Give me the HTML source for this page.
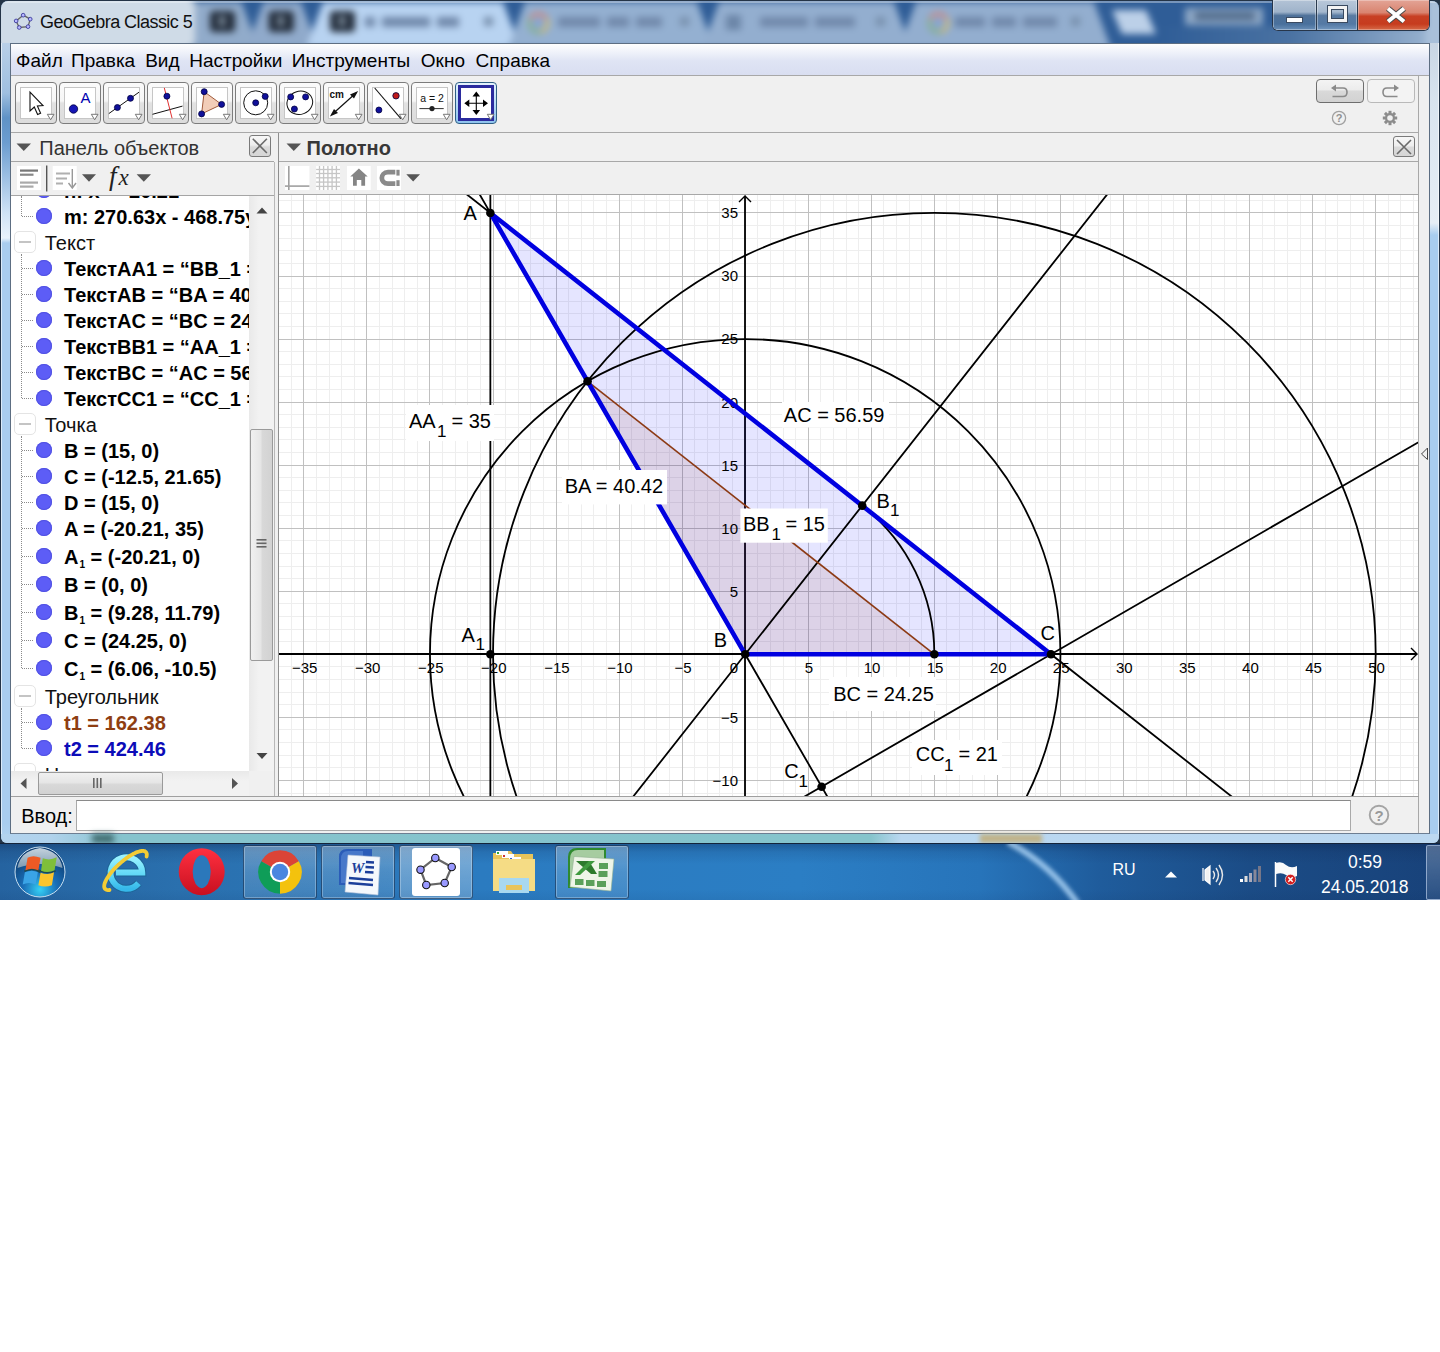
<!DOCTYPE html><html><head><meta charset="utf-8"><style>*{box-sizing:border-box;margin:0;padding:0}
html,body{width:1440px;height:1352px;overflow:hidden;background:#fff;font-family:"Liberation Sans",sans-serif;color:#000;position:relative}
.a{position:absolute}
.t{position:absolute;white-space:nowrap;line-height:1}
svg{overflow:visible}
</style></head><body>
<div class="a" style="left:0;top:0;width:1440px;height:845px;background:#243447"></div>
<div class="a" style="left:1px;top:1px;width:1438px;height:842px;border-radius:7px 7px 6px 6px;overflow:hidden;background:linear-gradient(180deg,#c3d3e5 0,#b2c9e2 44px,#a9c8ea 120px,#b2d3f0 700px,#a6cbe6 843px)"></div>
<div class="a" style="left:1px;top:43px;width:9px;height:791px;background:linear-gradient(180deg,#b9d0e8 0,#9fbfe0 50px,#5f92c6 75px,#6c9dd0 100px,#cfe3f6 170px,#e9f3fc 195px,#a9cdef 200px,#a9cdef 780px,#b3d4f0 800px)"></div>
<div class="a" style="left:1430px;top:43px;width:9px;height:791px;background:linear-gradient(180deg,#c9d6e4 0,#d9e4ef 60px,#e6eef6 180px,#a8cdef 192px,#a8cdef 800px)"></div>
<div class="a" style="left:1px;top:43px;width:1px;height:791px;background:rgba(255,255,255,0.6)"></div>
<div class="a" style="left:1438px;top:43px;width:1px;height:791px;background:rgba(255,255,255,0.6)"></div>
<div class="a" style="left:1px;top:1px;width:1438px;height:42px;border-radius:7px 7px 0 0;overflow:hidden;background:#2f5d97"><svg class="a" style="left:-1px;top:-1px;filter:blur(3.5px)" width="1440" height="46" viewBox="0 0 1440 46"><rect x="-10" y="-10" width="1460" height="70" fill="#2f5d97"/><defs><linearGradient id="rb" x1="0" x2="1" y1="0" y2="0"><stop offset="0" stop-color="#2f5d97"/><stop offset="0.45" stop-color="#4a72a2"/><stop offset="1" stop-color="#a3bbd6"/></linearGradient></defs><rect x="1160" y="26" width="290" height="30" fill="url(#rb)"/><rect x="1425" y="-5" width="30" height="60" fill="#a9c0da"/><path d="M150,2 L241.5,2 L258.5,48 L133,48 Z" fill="#91abca"/><path d="M263.5,2 L301,2 L318,48 L246.5,48 Z" fill="#90aacb"/><path d="M323,2 L503,2 L520,48 L306,48 Z" fill="#b8d3f1"/><path d="M525,2 L697,2 L714,48 L508,48 Z" fill="#94b0d1"/><path d="M719,2 L894,2 L911,48 L702,48 Z" fill="#93aecf"/><path d="M916,2 L1094,2 L1111,48 L899,48 Z" fill="#93aecf"/><path d="M1112,10 L1146,10 L1156,34 L1122,34 Z" fill="#bcd0e8"/><rect x="1185" y="8" width="78" height="17" fill="#8ea8c6"/><rect x="1195" y="12" width="60" height="8" fill="#506a8a"/><rect x="-10" y="-5" width="205" height="55" rx="10" fill="#cfdbe7"/><rect x="210" y="11" width="25" height="21" rx="4" fill="#232d3b"/><rect x="219" y="16" width="6" height="10" fill="#8090a0"/><rect x="268.7" y="11" width="25" height="21" rx="4" fill="#232d3b"/><rect x="277.7" y="16" width="6" height="10" fill="#8090a0"/><rect x="330" y="11" width="25" height="21" rx="4" fill="#232d3b"/><rect x="339" y="16" width="6" height="10" fill="#8090a0"/><rect x="365" y="17" width="10" height="10" fill="#7189ab"/><rect x="382" y="17" width="48" height="10" fill="#7189ab"/><rect x="437" y="17" width="22" height="10" fill="#7189ab"/><rect x="558" y="17" width="42" height="10" fill="#7189ab"/><rect x="607" y="17" width="22" height="10" fill="#7189ab"/><rect x="636" y="17" width="26" height="10" fill="#7189ab"/><rect x="760" y="17" width="48" height="10" fill="#7189ab"/><rect x="815" y="17" width="40" height="10" fill="#7189ab"/><rect x="955" y="17" width="30" height="10" fill="#7189ab"/><rect x="992" y="17" width="24" height="10" fill="#7189ab"/><rect x="1023" y="17" width="34" height="10" fill="#7189ab"/><rect x="484" y="17" width="9" height="9" fill="#7890ad"/><rect x="680" y="17" width="9" height="9" fill="#7890ad"/><rect x="876" y="17" width="9" height="9" fill="#7890ad"/><rect x="1071" y="17" width="9" height="9" fill="#7890ad"/><g transform="translate(538.5,23)"><path d="M-8,-4 A9,9 0 0 1 8,-4" fill="none" stroke="#c98a86" stroke-width="4"/><path d="M8,-4 A9,9 0 0 1 2,8.8" fill="none" stroke="#c9b877" stroke-width="4"/><path d="M2,8.8 A9,9 0 0 1 -8,-4" fill="none" stroke="#86b08e" stroke-width="4"/><circle r="4" fill="#7fa0d6"/></g><g transform="translate(938.5,23)"><path d="M-8,-4 A9,9 0 0 1 8,-4" fill="none" stroke="#c98a86" stroke-width="4"/><path d="M8,-4 A9,9 0 0 1 2,8.8" fill="none" stroke="#c9b877" stroke-width="4"/><path d="M2,8.8 A9,9 0 0 1 -8,-4" fill="none" stroke="#86b08e" stroke-width="4"/><circle r="4" fill="#7fa0d6"/></g><rect x="726" y="15" width="15" height="15" fill="#6c86a8"/></svg><div class="a" style="left:0;top:0;width:1438px;height:2px;background:rgba(255,255,255,0.35)"></div></div>
<svg class="a" style="left:12px;top:12px" width="22" height="20" viewBox="0 0 22 20"><g transform="translate(1.5,1) scale(0.88)"><polygon points="11,2.5 19,7 16.5,15.5 6.5,16.5 3,9" fill="none" stroke="#666" stroke-width="1.5"/><circle cx="11" cy="2.5" r="2.1" fill="#b8b8ff" stroke="#2a2a90" stroke-width="0.9"/><circle cx="19" cy="7" r="2.1" fill="#b8b8ff" stroke="#2a2a90" stroke-width="0.9"/><circle cx="16.5" cy="15.5" r="2.1" fill="#b8b8ff" stroke="#2a2a90" stroke-width="0.9"/><circle cx="6.5" cy="16.5" r="2.1" fill="#b8b8ff" stroke="#2a2a90" stroke-width="0.9"/><circle cx="3" cy="9" r="2.1" fill="#b8b8ff" stroke="#2a2a90" stroke-width="0.9"/></g></svg>
<div class="t" style="left:40px;top:13px;font-size:18px;color:#111;letter-spacing:-0.55px">GeoGebra Classic 5</div>
<div class="a" style="left:1272px;top:0;width:158px;height:31px;border:1px solid #27364a;border-top:none;border-radius:0 0 6px 6px;overflow:hidden;background:#d8e2ee"><div class="a" style="left:0;top:0;width:43px;height:30px;background:linear-gradient(180deg,#b3c3d6 0,#9fb3ca 40%,#4f7199 52%,#49709c 80%,#6a8fb8 100%);box-shadow:inset 0 0 0 1px rgba(255,255,255,0.35)"></div><div class="a" style="left:43px;top:0;width:1px;height:30px;background:#2a3a4e"></div><div class="a" style="left:44px;top:0;width:40px;height:30px;background:linear-gradient(180deg,#b9c8da 0,#a5b8ce 40%,#5a7ba2 52%,#5479a4 80%,#7398c0 100%);box-shadow:inset 0 0 0 1px rgba(255,255,255,0.35)"></div><div class="a" style="left:84px;top:0;width:1px;height:30px;background:#2a3a4e"></div><div class="a" style="left:85px;top:0;width:73px;height:30px;background:linear-gradient(180deg,#e3a496 0,#d98470 42%,#c84024 54%,#c63c1e 80%,#d66a48 100%);box-shadow:inset 0 0 0 1px rgba(255,255,255,0.3)"></div><div class="a" style="left:13px;top:17px;width:17px;height:6px;background:#fff;border:1px solid #3a4a60;"></div><div class="a" style="left:55px;top:6px;width:19px;height:16px;border:3.5px solid #f4f4f4;box-shadow:0 0 0 1px #3a4a60, inset 0 0 0 1px #3a4a60"></div><svg class="a" style="left:111px;top:6px" width="24" height="18" viewBox="0 0 24 18"><path d="M4,2.5 L20,15.5 M20,2.5 L4,15.5" stroke="#4a4a4a" stroke-width="6"/><path d="M4,2.5 L20,15.5 M20,2.5 L4,15.5" stroke="#fff" stroke-width="4"/></svg></div>
<div class="a" style="left:10px;top:43px;width:1420px;height:791px;background:#f0f0f0;border:1px solid #5d6e82;border-bottom-color:#6d7e92"></div>
<div class="a" style="left:11px;top:44px;width:1418px;height:32px;background:linear-gradient(180deg,#fefefe 0,#f3f5fb 20%,#dfe4f4 55%,#d9def1 100%);border-bottom:1px solid #a8a8a8"></div>
<div class="t" style="left:16.0px;top:51px;font-size:19px">Файл</div>
<div class="t" style="left:71.0px;top:51px;font-size:19px">Правка</div>
<div class="t" style="left:145.2px;top:51px;font-size:19px">Вид</div>
<div class="t" style="left:189.2px;top:51px;font-size:19px">Настройки</div>
<div class="t" style="left:291.8px;top:51px;font-size:19px">Инструменты</div>
<div class="t" style="left:420.8px;top:51px;font-size:19px">Окно</div>
<div class="t" style="left:475.6px;top:51px;font-size:19px">Справка</div>
<div class="a" style="left:11px;top:132px;width:1408px;height:1px;background:#a8a8a8"></div><div class="a" style="left:1418px;top:76px;width:1px;height:57px;background:#a8a8a8"></div>
<div class="a" style="left:15.2px;top:82px;width:41.5px;height:41.5px;border:1px solid #7c7c7c;border-radius:4px;background:linear-gradient(180deg,#fbfbfb 0,#f6f6f6 45%,#e2e2e2 50%,#dcdcdc 100%)"></div>
<div class="a" style="left:19.8px;top:86.7px;width:32px;height:32px;border:1px solid #c6c6c6;background:#fff"></div>
<svg class="a" style="left:15.2px;top:82px" width="42" height="42" viewBox="0 0 42 42"><g transform="translate(5,5)"><path d="M10,5 L10,24 L14.3,20 L17.6,27.5 L20.6,26.2 L17.4,18.9 L23,18.6 Z" fill="#fff" stroke="#111" stroke-width="1.1" stroke-linejoin="miter"/></g><path d="M32.3,32.3 L39,32.3 L35.65,37.8 Z" fill="#fff" stroke="#777" stroke-width="1"/></svg>
<div class="a" style="left:59.2px;top:82px;width:41.5px;height:41.5px;border:1px solid #7c7c7c;border-radius:4px;background:linear-gradient(180deg,#fbfbfb 0,#f6f6f6 45%,#e2e2e2 50%,#dcdcdc 100%)"></div>
<div class="a" style="left:63.8px;top:86.7px;width:32px;height:32px;border:1px solid #c6c6c6;background:#fff"></div>
<svg class="a" style="left:59.2px;top:82px" width="42" height="42" viewBox="0 0 42 42"><g transform="translate(5,5)"><circle cx="9.5" cy="22" r="4.2" fill="#1515b5" stroke="#000040" stroke-width="0.8"/><text x="21.5" y="16" font-family="Liberation Sans" font-size="15" fill="#0000b0" text-anchor="middle">A</text></g><path d="M32.3,32.3 L39,32.3 L35.65,37.8 Z" fill="#fff" stroke="#777" stroke-width="1"/></svg>
<div class="a" style="left:103.2px;top:82px;width:41.5px;height:41.5px;border:1px solid #7c7c7c;border-radius:4px;background:linear-gradient(180deg,#fbfbfb 0,#f6f6f6 45%,#e2e2e2 50%,#dcdcdc 100%)"></div>
<div class="a" style="left:107.8px;top:86.7px;width:32px;height:32px;border:1px solid #c6c6c6;background:#fff"></div>
<svg class="a" style="left:103.2px;top:82px" width="42" height="42" viewBox="0 0 42 42"><g transform="translate(5,5)"><line x1="0.8" y1="26.6" x2="31" y2="5.2" stroke="#111" stroke-width="1"/><circle cx="9.4" cy="20.5" r="3.0" fill="#10109a" stroke="#000040" stroke-width="0.8"/><circle cx="22.5" cy="11.3" r="3.0" fill="#10109a" stroke="#000040" stroke-width="0.8"/></g><path d="M32.3,32.3 L39,32.3 L35.65,37.8 Z" fill="#fff" stroke="#777" stroke-width="1"/></svg>
<div class="a" style="left:147.2px;top:82px;width:41.5px;height:41.5px;border:1px solid #7c7c7c;border-radius:4px;background:linear-gradient(180deg,#fbfbfb 0,#f6f6f6 45%,#e2e2e2 50%,#dcdcdc 100%)"></div>
<div class="a" style="left:151.8px;top:86.7px;width:32px;height:32px;border:1px solid #c6c6c6;background:#fff"></div>
<svg class="a" style="left:147.2px;top:82px" width="42" height="42" viewBox="0 0 42 42"><g transform="translate(5,5)"><line x1="0.5" y1="27.3" x2="30.5" y2="19.1" stroke="#111" stroke-width="1"/><line x1="12.3" y1="0.9" x2="20.1" y2="31.3" stroke="#e03030" stroke-width="1"/><circle cx="14.9" cy="9.2" r="3.0" fill="#10109a" stroke="#000040" stroke-width="0.8"/></g><path d="M32.3,32.3 L39,32.3 L35.65,37.8 Z" fill="#fff" stroke="#777" stroke-width="1"/></svg>
<div class="a" style="left:191.2px;top:82px;width:41.5px;height:41.5px;border:1px solid #7c7c7c;border-radius:4px;background:linear-gradient(180deg,#fbfbfb 0,#f6f6f6 45%,#e2e2e2 50%,#dcdcdc 100%)"></div>
<div class="a" style="left:195.8px;top:86.7px;width:32px;height:32px;border:1px solid #c6c6c6;background:#fff"></div>
<svg class="a" style="left:191.2px;top:82px" width="42" height="42" viewBox="0 0 42 42"><g transform="translate(5,5)"><polygon points="8.2,4.7 25.6,17.4 5.6,26.9" fill="#f2cdb8" stroke="#a05a3a" stroke-width="1"/><circle cx="8.2" cy="4.7" r="3.0" fill="#10109a" stroke="#000040" stroke-width="0.8"/><circle cx="25.6" cy="17.4" r="3.0" fill="#10109a" stroke="#000040" stroke-width="0.8"/><circle cx="5.6" cy="26.9" r="3.0" fill="#10109a" stroke="#000040" stroke-width="0.8"/></g><path d="M32.3,32.3 L39,32.3 L35.65,37.8 Z" fill="#fff" stroke="#777" stroke-width="1"/></svg>
<div class="a" style="left:235.2px;top:82px;width:41.5px;height:41.5px;border:1px solid #7c7c7c;border-radius:4px;background:linear-gradient(180deg,#fbfbfb 0,#f6f6f6 45%,#e2e2e2 50%,#dcdcdc 100%)"></div>
<div class="a" style="left:239.8px;top:86.7px;width:32px;height:32px;border:1px solid #c6c6c6;background:#fff"></div>
<svg class="a" style="left:235.2px;top:82px" width="42" height="42" viewBox="0 0 42 42"><g transform="translate(5,5)"><circle cx="15.7" cy="15.8" r="12" fill="none" stroke="#111" stroke-width="1"/><circle cx="15.7" cy="15.8" r="3.0" fill="#10109a" stroke="#000040" stroke-width="0.8"/><circle cx="25.2" cy="9.4" r="3.0" fill="#10109a" stroke="#000040" stroke-width="0.8"/></g><path d="M32.3,32.3 L39,32.3 L35.65,37.8 Z" fill="#fff" stroke="#777" stroke-width="1"/></svg>
<div class="a" style="left:279.2px;top:82px;width:41.5px;height:41.5px;border:1px solid #7c7c7c;border-radius:4px;background:linear-gradient(180deg,#fbfbfb 0,#f6f6f6 45%,#e2e2e2 50%,#dcdcdc 100%)"></div>
<div class="a" style="left:283.8px;top:86.7px;width:32px;height:32px;border:1px solid #c6c6c6;background:#fff"></div>
<svg class="a" style="left:279.2px;top:82px" width="42" height="42" viewBox="0 0 42 42"><g transform="translate(5,5)"><ellipse cx="15.8" cy="15.8" rx="13" ry="11.5" transform="rotate(-20 15.8 15.8)" fill="none" stroke="#111" stroke-width="1"/><circle cx="6.7" cy="9.9" r="3.0" fill="#10109a" stroke="#000040" stroke-width="0.8"/><circle cx="21.6" cy="9.9" r="3.0" fill="#10109a" stroke="#000040" stroke-width="0.8"/><circle cx="10.4" cy="22" r="3.0" fill="#10109a" stroke="#000040" stroke-width="0.8"/></g><path d="M32.3,32.3 L39,32.3 L35.65,37.8 Z" fill="#fff" stroke="#777" stroke-width="1"/></svg>
<div class="a" style="left:323.2px;top:82px;width:41.5px;height:41.5px;border:1px solid #7c7c7c;border-radius:4px;background:linear-gradient(180deg,#fbfbfb 0,#f6f6f6 45%,#e2e2e2 50%,#dcdcdc 100%)"></div>
<div class="a" style="left:327.8px;top:86.7px;width:32px;height:32px;border:1px solid #c6c6c6;background:#fff"></div>
<svg class="a" style="left:323.2px;top:82px" width="42" height="42" viewBox="0 0 42 42"><g transform="translate(5,5)"><text x="1.5" y="11" font-family="Liberation Sans" font-size="10" font-weight="bold" fill="#111">cm</text><line x1="4" y1="27.5" x2="28" y2="6" stroke="#111" stroke-width="1.2"/><path d="M1.9,29.4 L10,26 L6,22 Z M30.1,4.1 L22,7.5 L26,11.5 Z" fill="#111"/></g><path d="M32.3,32.3 L39,32.3 L35.65,37.8 Z" fill="#fff" stroke="#777" stroke-width="1"/></svg>
<div class="a" style="left:367.2px;top:82px;width:41.5px;height:41.5px;border:1px solid #7c7c7c;border-radius:4px;background:linear-gradient(180deg,#fbfbfb 0,#f6f6f6 45%,#e2e2e2 50%,#dcdcdc 100%)"></div>
<div class="a" style="left:371.8px;top:86.7px;width:32px;height:32px;border:1px solid #c6c6c6;background:#fff"></div>
<svg class="a" style="left:367.2px;top:82px" width="42" height="42" viewBox="0 0 42 42"><g transform="translate(5,5)"><line x1="2.7" y1="1" x2="28.9" y2="31.7" stroke="#111" stroke-width="1.1"/><circle cx="24" cy="8.8" r="3.2" fill="#c01a1a" stroke="#000040" stroke-width="0.8"/><circle cx="6.9" cy="23" r="3.0" fill="#10109a" stroke="#000040" stroke-width="0.8"/></g><path d="M32.3,32.3 L39,32.3 L35.65,37.8 Z" fill="#fff" stroke="#777" stroke-width="1"/></svg>
<div class="a" style="left:411.2px;top:82px;width:41.5px;height:41.5px;border:1px solid #7c7c7c;border-radius:4px;background:linear-gradient(180deg,#fbfbfb 0,#f6f6f6 45%,#e2e2e2 50%,#dcdcdc 100%)"></div>
<div class="a" style="left:415.8px;top:86.7px;width:32px;height:32px;border:1px solid #c6c6c6;background:#fff"></div>
<svg class="a" style="left:411.2px;top:82px" width="42" height="42" viewBox="0 0 42 42"><g transform="translate(5,5)"><text x="16" y="15" font-family="Liberation Sans" font-size="10.5" fill="#111" text-anchor="middle">a = 2</text><line x1="3.4" y1="21.6" x2="27.7" y2="21.6" stroke="#333" stroke-width="1"/><circle cx="16" cy="21.6" r="2.6" fill="#222"/></g><path d="M32.3,32.3 L39,32.3 L35.65,37.8 Z" fill="#fff" stroke="#777" stroke-width="1"/></svg>
<div class="a" style="left:455.2px;top:82px;width:41.5px;height:41.5px;border:1px solid #2f6085;border-radius:4px;background:linear-gradient(180deg,#e4f2fc 0,#b9dcf7 50%,#8ec3ee 100%)"></div>
<div class="a" style="left:458.2px;top:85px;width:35.7px;height:35.8px;border:3px solid #2b2b9e;background:#fff"></div>
<svg class="a" style="left:455.2px;top:82px" width="42" height="42" viewBox="0 0 42 42"><g transform="translate(5,5)"><path d="M16.3,6 L16.3,26 M6,16.3 L26,16.3" stroke="#000" stroke-width="1.1"/><path d="M16.3,4.5 L12.5,9.5 L20.1,9.5 Z M16.3,28 L12.5,23 L20.1,23 Z M4.3,16.3 L9.3,12.5 L9.3,20.1 Z M28,16.3 L23,12.5 L23,20.1 Z" fill="#000"/></g><path d="M32.3,32.3 L39,32.3 L35.65,37.8 Z" fill="#fff" stroke="#777" stroke-width="1"/></svg>
<div class="a" style="left:1315.5px;top:79.4px;width:48px;height:24px;border:1px solid #6e6e6e;border-radius:4px;background:linear-gradient(180deg,#f4f4f4 0,#ececec 45%,#d9d9d9 50%,#d2d2d2 100%)"></div>
<div class="a" style="left:1366.6px;top:79.4px;width:48px;height:24px;border:1px solid #b9b9b9;border-radius:4px;background:#f3f3f3"></div>
<svg class="a" style="left:1315px;top:79px" width="100" height="50" viewBox="0 0 100 50"><path d="M20,9 L28,9 Q32,9 32,13.2 Q32,17.5 28,17.5 L17.5,17.5" fill="none" stroke="#8a8a8a" stroke-width="1.6"/><path d="M16,9 L21,5.5 L21,12.5 Z" fill="#8a8a8a"/><path d="M80,9 L72,9 Q68,9 68,13.2 Q68,17.5 72,17.5 L82.5,17.5" fill="none" stroke="#8a8a8a" stroke-width="1.6"/><path d="M84,9 L79,5.5 L79,12.5 Z" fill="#8a8a8a"/><circle cx="24" cy="39" r="6.6" fill="none" stroke="#a0a0a0" stroke-width="1.3"/><text x="24" y="43.3" font-family="Liberation Sans" font-weight="bold" font-size="11" fill="#909090" text-anchor="middle">?</text><g transform="translate(75,39)" fill="#8c8c8c"><rect x="-1.5" y="-7.2" width="3" height="4" transform="rotate(0)"/><rect x="-1.5" y="-7.2" width="3" height="4" transform="rotate(45)"/><rect x="-1.5" y="-7.2" width="3" height="4" transform="rotate(90)"/><rect x="-1.5" y="-7.2" width="3" height="4" transform="rotate(135)"/><rect x="-1.5" y="-7.2" width="3" height="4" transform="rotate(180)"/><rect x="-1.5" y="-7.2" width="3" height="4" transform="rotate(225)"/><rect x="-1.5" y="-7.2" width="3" height="4" transform="rotate(270)"/><rect x="-1.5" y="-7.2" width="3" height="4" transform="rotate(315)"/><circle r="5" fill="#8c8c8c"/><circle r="2.8" fill="#f0f0f0"/></g></svg>
<div class="a" style="left:11px;top:133px;width:263px;height:29px;background:#f0f0f0;border-bottom:1px solid #a5a5a5"></div>
<svg class="a" style="left:16px;top:143px" width="16" height="9"><path d="M0.5,0.5 L15,0.5 L7.75,8 Z" fill="#555"/></svg>
<div class="t" style="left:39.3px;top:138px;font-size:20px;color:#333">Панель объектов</div>
<div class="a" style="left:249.2px;top:135.1px;width:21.7px;height:21.8px;border:1px solid #7a7a7a;border-radius:3px;background:linear-gradient(180deg,#f7f7f7 0,#eeeeee 45%,#dadada 55%,#d6d6d6 100%)"></div>
<svg class="a" style="left:249.2px;top:135.1px" width="22" height="22"><path d="M3.8,3.8 L17.9,18 M17.9,3.8 L3.8,18" stroke="#6a6a6a" stroke-width="1.6"/></svg>
<div class="a" style="left:17px;top:165.7px;width:24px;height:24px;background:#fff"></div>
<svg class="a" style="left:17px;top:165.7px" width="140" height="26"><rect x="3" y="3.5" width="18" height="2.2" fill="#777"/><rect x="3" y="7.6" width="13.5" height="2.2" fill="#888"/><rect x="3" y="15.5" width="18" height="2.2" fill="#aaa"/><rect x="3" y="19.5" width="13.5" height="2.2" fill="#aaa"/><rect x="29" y="-0.5" width="1.4" height="26" fill="#555"/><rect x="35.7" y="0" width="24" height="24" fill="#fff"/><rect x="39" y="6.5" width="14" height="2" fill="#b0b0b0"/><rect x="39" y="11.5" width="11" height="2" fill="#b0b0b0"/><rect x="39" y="16.5" width="7" height="2" fill="#b0b0b0"/><path d="M55.3,3 L55.3,21" stroke="#999" stroke-width="1.4"/><path d="M51.5,17 L55.3,22 L59,17" fill="none" stroke="#999" stroke-width="1.4"/><path d="M65,8.3 L79,8.3 L72,15.7 Z" fill="#555"/><path d="M119.6,8.3 L134,8.3 L126.8,15.7 Z" fill="#555"/></svg>
<div class="t" style="left:109px;top:163px;font-family:'Liberation Serif';font-style:italic;font-size:27px;color:#222;letter-spacing:0px">f<span style="font-size:23px;margin-left:2px">x</span></div>
<div class="a" style="left:11px;top:195px;width:263px;height:1px;background:#a5a5a5"></div>
<div class="a" style="left:11px;top:196px;width:238px;height:575px;background:#fff;overflow:hidden"><div class="a" style="left:10px;top:0.0px;width:0;height:20.0px;border-left:1px dotted #8a8a8a"></div><div class="a" style="left:24.9px;top:-14.0px;width:16px;height:16px;border-radius:8px;background:#5d5df6;box-shadow:inset 0 0 0 1px #5252e2"></div><div class="a" style="left:11px;top:-6.0px;width:11px;height:0;border-top:1px dotted #8a8a8a"></div><div class="t" style="left:53.0px;top:-15.3px;font-size:20px;font-weight:bold;color:#000">n: x = -20.21</div><div class="a" style="left:24.9px;top:12.0px;width:16px;height:16px;border-radius:8px;background:#5d5df6;box-shadow:inset 0 0 0 1px #5252e2"></div><div class="a" style="left:11px;top:20.0px;width:11px;height:0;border-top:1px dotted #8a8a8a"></div><div class="t" style="left:53.0px;top:10.7px;font-size:20px;font-weight:bold;color:#000">m: 270.63x - 468.75y</div><div class="a" style="left:3px;top:34.8px;width:22px;height:22.4px;border:1px solid #e4e4e4;border-radius:5px;background:#fff"></div><div class="a" style="left:8px;top:44.8px;width:12px;height:2.6px;background:#c4c4c4"></div><div class="t" style="left:33.7px;top:36.5px;font-size:20px;color:#111">Текст</div><div class="a" style="left:10px;top:58.0px;width:0;height:144.0px;border-left:1px dotted #8a8a8a"></div><div class="a" style="left:24.9px;top:64.0px;width:16px;height:16px;border-radius:8px;background:#5d5df6;box-shadow:inset 0 0 0 1px #5252e2"></div><div class="a" style="left:11px;top:72.0px;width:11px;height:0;border-top:1px dotted #8a8a8a"></div><div class="t" style="left:53.0px;top:62.7px;font-size:20px;font-weight:bold;color:#000">ТекстAA1 = “BB_1 = 15”</div><div class="a" style="left:24.9px;top:90.0px;width:16px;height:16px;border-radius:8px;background:#5d5df6;box-shadow:inset 0 0 0 1px #5252e2"></div><div class="a" style="left:11px;top:98.0px;width:11px;height:0;border-top:1px dotted #8a8a8a"></div><div class="t" style="left:53.0px;top:88.7px;font-size:20px;font-weight:bold;color:#000">ТекстAB = “BA = 40.42”</div><div class="a" style="left:24.9px;top:116.0px;width:16px;height:16px;border-radius:8px;background:#5d5df6;box-shadow:inset 0 0 0 1px #5252e2"></div><div class="a" style="left:11px;top:124.0px;width:11px;height:0;border-top:1px dotted #8a8a8a"></div><div class="t" style="left:53.0px;top:114.7px;font-size:20px;font-weight:bold;color:#000">ТекстAC = “BC = 24.25”</div><div class="a" style="left:24.9px;top:142.0px;width:16px;height:16px;border-radius:8px;background:#5d5df6;box-shadow:inset 0 0 0 1px #5252e2"></div><div class="a" style="left:11px;top:150.0px;width:11px;height:0;border-top:1px dotted #8a8a8a"></div><div class="t" style="left:53.0px;top:140.7px;font-size:20px;font-weight:bold;color:#000">ТекстBB1 = “AA_1 = 35”</div><div class="a" style="left:24.9px;top:168.0px;width:16px;height:16px;border-radius:8px;background:#5d5df6;box-shadow:inset 0 0 0 1px #5252e2"></div><div class="a" style="left:11px;top:176.0px;width:11px;height:0;border-top:1px dotted #8a8a8a"></div><div class="t" style="left:53.0px;top:166.7px;font-size:20px;font-weight:bold;color:#000">ТекстBC = “AC = 56.59”</div><div class="a" style="left:24.9px;top:194.0px;width:16px;height:16px;border-radius:8px;background:#5d5df6;box-shadow:inset 0 0 0 1px #5252e2"></div><div class="a" style="left:11px;top:202.0px;width:11px;height:0;border-top:1px dotted #8a8a8a"></div><div class="t" style="left:53.0px;top:192.7px;font-size:20px;font-weight:bold;color:#000">ТекстCC1 = “CC_1 = 21”</div><div class="a" style="left:3px;top:216.8px;width:22px;height:22.4px;border:1px solid #e4e4e4;border-radius:5px;background:#fff"></div><div class="a" style="left:8px;top:226.8px;width:12px;height:2.6px;background:#c4c4c4"></div><div class="t" style="left:33.7px;top:218.5px;font-size:20px;color:#111">Точка</div><div class="a" style="left:10px;top:240.0px;width:0;height:232.0px;border-left:1px dotted #8a8a8a"></div><div class="a" style="left:24.9px;top:246.0px;width:16px;height:16px;border-radius:8px;background:#5d5df6;box-shadow:inset 0 0 0 1px #5252e2"></div><div class="a" style="left:11px;top:254.0px;width:11px;height:0;border-top:1px dotted #8a8a8a"></div><div class="t" style="left:53.0px;top:244.7px;font-size:20px;font-weight:bold;color:#000">B = (15, 0)</div><div class="a" style="left:24.9px;top:272.0px;width:16px;height:16px;border-radius:8px;background:#5d5df6;box-shadow:inset 0 0 0 1px #5252e2"></div><div class="a" style="left:11px;top:280.0px;width:11px;height:0;border-top:1px dotted #8a8a8a"></div><div class="t" style="left:53.0px;top:270.7px;font-size:20px;font-weight:bold;color:#000">C = (-12.5, 21.65)</div><div class="a" style="left:24.9px;top:298.0px;width:16px;height:16px;border-radius:8px;background:#5d5df6;box-shadow:inset 0 0 0 1px #5252e2"></div><div class="a" style="left:11px;top:306.0px;width:11px;height:0;border-top:1px dotted #8a8a8a"></div><div class="t" style="left:53.0px;top:296.7px;font-size:20px;font-weight:bold;color:#000">D = (15, 0)</div><div class="a" style="left:24.9px;top:324.0px;width:16px;height:16px;border-radius:8px;background:#5d5df6;box-shadow:inset 0 0 0 1px #5252e2"></div><div class="a" style="left:11px;top:332.0px;width:11px;height:0;border-top:1px dotted #8a8a8a"></div><div class="t" style="left:53.0px;top:322.7px;font-size:20px;font-weight:bold;color:#000">A = (-20.21, 35)</div><div class="a" style="left:24.9px;top:352.0px;width:16px;height:16px;border-radius:8px;background:#5d5df6;box-shadow:inset 0 0 0 1px #5252e2"></div><div class="a" style="left:11px;top:360.0px;width:11px;height:0;border-top:1px dotted #8a8a8a"></div><div class="t" style="left:53.0px;top:350.7px;font-size:20px;font-weight:bold;color:#000">A<span style="font-size:10px;position:relative;top:4px;margin-left:1px">1</span> = (-20.21, 0)</div><div class="a" style="left:24.9px;top:380.0px;width:16px;height:16px;border-radius:8px;background:#5d5df6;box-shadow:inset 0 0 0 1px #5252e2"></div><div class="a" style="left:11px;top:388.0px;width:11px;height:0;border-top:1px dotted #8a8a8a"></div><div class="t" style="left:53.0px;top:378.7px;font-size:20px;font-weight:bold;color:#000">B = (0, 0)</div><div class="a" style="left:24.9px;top:408.0px;width:16px;height:16px;border-radius:8px;background:#5d5df6;box-shadow:inset 0 0 0 1px #5252e2"></div><div class="a" style="left:11px;top:416.0px;width:11px;height:0;border-top:1px dotted #8a8a8a"></div><div class="t" style="left:53.0px;top:406.7px;font-size:20px;font-weight:bold;color:#000">B<span style="font-size:10px;position:relative;top:4px;margin-left:1px">1</span> = (9.28, 11.79)</div><div class="a" style="left:24.9px;top:436.0px;width:16px;height:16px;border-radius:8px;background:#5d5df6;box-shadow:inset 0 0 0 1px #5252e2"></div><div class="a" style="left:11px;top:444.0px;width:11px;height:0;border-top:1px dotted #8a8a8a"></div><div class="t" style="left:53.0px;top:434.7px;font-size:20px;font-weight:bold;color:#000">C = (24.25, 0)</div><div class="a" style="left:24.9px;top:464.0px;width:16px;height:16px;border-radius:8px;background:#5d5df6;box-shadow:inset 0 0 0 1px #5252e2"></div><div class="a" style="left:11px;top:472.0px;width:11px;height:0;border-top:1px dotted #8a8a8a"></div><div class="t" style="left:53.0px;top:462.7px;font-size:20px;font-weight:bold;color:#000">C<span style="font-size:10px;position:relative;top:4px;margin-left:1px">1</span> = (6.06, -10.5)</div><div class="a" style="left:3px;top:488.8px;width:22px;height:22.4px;border:1px solid #e4e4e4;border-radius:5px;background:#fff"></div><div class="a" style="left:8px;top:498.8px;width:12px;height:2.6px;background:#c4c4c4"></div><div class="t" style="left:33.7px;top:490.5px;font-size:20px;color:#111">Треугольник</div><div class="a" style="left:10px;top:512.0px;width:0;height:40.0px;border-left:1px dotted #8a8a8a"></div><div class="a" style="left:24.9px;top:518.0px;width:16px;height:16px;border-radius:8px;background:#5d5df6;box-shadow:inset 0 0 0 1px #5252e2"></div><div class="a" style="left:11px;top:526.0px;width:11px;height:0;border-top:1px dotted #8a8a8a"></div><div class="t" style="left:53.0px;top:516.7px;font-size:20px;font-weight:bold;color:#8e3e12">t1 = 162.38</div><div class="a" style="left:24.9px;top:544.0px;width:16px;height:16px;border-radius:8px;background:#5d5df6;box-shadow:inset 0 0 0 1px #5252e2"></div><div class="a" style="left:11px;top:552.0px;width:11px;height:0;border-top:1px dotted #8a8a8a"></div><div class="t" style="left:53.0px;top:542.7px;font-size:20px;font-weight:bold;color:#0c0cb8">t2 = 424.46</div><div class="a" style="left:3px;top:566.8px;width:22px;height:22.4px;border:1px solid #e4e4e4;border-radius:5px;background:#fff"></div><div class="a" style="left:8px;top:576.8px;width:12px;height:2.6px;background:#c4c4c4"></div><div class="t" style="left:33.7px;top:568.5px;font-size:20px;color:#111">Наклонная</div></div>
<div class="a" style="left:249px;top:196px;width:25px;height:575px;background:linear-gradient(90deg,#e9e9e9 0,#f2f2f2 40%,#f2f2f2 100%)"></div>
<svg class="a" style="left:249px;top:196px" width="25" height="575"><path d="M7.5,17.5 L13,11.5 L18.5,17.5 Z" fill="#444"/><path d="M7.5,557 L13,563 L18.5,557 Z" fill="#444"/></svg>
<div class="a" style="left:250px;top:429px;width:23px;height:232px;border:1px solid #9a9a9a;border-radius:2px;background:linear-gradient(90deg,#f0f0f0 0,#e6e6e6 45%,#d8d8d8 55%,#d2d2d2 100%)"></div>
<svg class="a" style="left:250px;top:537px" width="23" height="16"><rect x="6.5" y="2" width="10" height="1.6" fill="#666"/><rect x="6.5" y="5.5" width="10" height="1.6" fill="#666"/><rect x="6.5" y="9" width="10" height="1.6" fill="#666"/></svg>
<div class="a" style="left:11px;top:771px;width:238px;height:25px;background:linear-gradient(180deg,#e9e9e9 0,#f2f2f2 40%,#f2f2f2 100%)"></div>
<div class="a" style="left:249px;top:771px;width:25px;height:25px;background:#f0f0f0"></div>
<svg class="a" style="left:11px;top:771px" width="238" height="25"><path d="M15.5,7 L9.5,12.5 L15.5,18 Z" fill="#555"/><path d="M221,7 L227,12.5 L221,18 Z" fill="#555"/></svg>
<div class="a" style="left:38px;top:772px;width:125px;height:23px;border:1px solid #9a9a9a;border-radius:2px;background:linear-gradient(180deg,#f0f0f0 0,#e6e6e6 45%,#d8d8d8 55%,#d2d2d2 100%)"></div>
<svg class="a" style="left:91px;top:772px" width="16" height="23"><rect x="2" y="6" width="1.6" height="10" fill="#666"/><rect x="5.5" y="6" width="1.6" height="10" fill="#666"/><rect x="9" y="6" width="1.6" height="10" fill="#666"/></svg>
<div class="a" style="left:274px;top:162px;width:1px;height:635px;background:#b8b8b8"></div>
<div class="a" style="left:278px;top:133px;width:1.4px;height:664px;background:#8e8e8e"></div>
<div class="a" style="left:279px;top:161px;width:1140px;height:1px;background:#a8a8a8"></div>
<div class="a" style="left:279px;top:194px;width:1140px;height:1px;background:#a8a8a8"></div>
<div class="a" style="left:1418px;top:133px;width:1px;height:700px;background:#a8a8a8"></div>
<svg class="a" style="left:286px;top:143px" width="16" height="9"><path d="M0.5,0.5 L15,0.5 L7.75,8 Z" fill="#555"/></svg>
<div class="t" style="left:306.5px;top:138px;font-size:20px;font-weight:bold;color:#383838">Полотно</div>
<div class="a" style="left:1393px;top:135.6px;width:22px;height:21px;border:1px solid #7a7a7a;border-radius:3px;background:linear-gradient(180deg,#f7f7f7 0,#eeeeee 45%,#dadada 55%,#d6d6d6 100%)"></div>
<svg class="a" style="left:1393px;top:135.6px" width="22" height="22"><path d="M4,4 L18,18 M18,4 L4,18" stroke="#6a6a6a" stroke-width="1.6"/></svg>
<svg class="a" style="left:280px;top:162px" width="150" height="32" viewBox="0 0 150 32"><rect x="5" y="4" width="24.4" height="24" fill="#fff"/><rect x="8" y="4" width="1.6" height="24" fill="#a0a0a0"/><rect x="5" y="23.3" width="24.4" height="1.6" fill="#a0a0a0"/><rect x="36.1" y="3.9" width="23.9" height="24.1" fill="#fff"/><rect x="38.85" y="4" width="1.3" height="24" fill="#c6c6c6"/><rect x="42.95" y="4" width="1.3" height="24" fill="#c6c6c6"/><rect x="47.25" y="4" width="1.3" height="24" fill="#c6c6c6"/><rect x="51.45" y="4" width="1.3" height="24" fill="#c6c6c6"/><rect x="55.75" y="4" width="1.3" height="24" fill="#c6c6c6"/><rect x="36.1" y="6.85" width="23.9" height="1.3" fill="#c6c6c6"/><rect x="36.1" y="10.85" width="23.9" height="1.3" fill="#c6c6c6"/><rect x="36.1" y="15.15" width="23.9" height="1.3" fill="#c6c6c6"/><rect x="36.1" y="19.450000000000003" width="23.9" height="1.3" fill="#c6c6c6"/><rect x="36.1" y="23.75" width="23.9" height="1.3" fill="#c6c6c6"/><rect x="67" y="4" width="23.7" height="24" fill="#fff"/><path d="M78.9,6.6 L87.7,14.5 L85.1,14.5 L85.1,23.7 L81.3,23.7 L81.3,18 L76.8,18 L76.8,23.7 L73,23.7 L73,14.5 L70.3,14.5 Z" fill="#858585"/><rect x="97" y="4" width="24" height="24" fill="#fff"/><path d="M115.3,10.2 L108,10.2 C99.8,10.2 99.8,21.7 108,21.7 L115.3,21.7" fill="none" stroke="#8a8a8a" stroke-width="4.7"/><rect x="116.4" y="7.8" width="3.2" height="5.8" fill="#8a8a8a"/><rect x="116.4" y="18.2" width="3.2" height="5.8" fill="#8a8a8a"/><path d="M126.3,12.2 L140,12.2 L133.15,19.5 Z" fill="#555"/></svg>
<svg class="a" style="left:1419px;top:446px" width="10" height="16"><path d="M8.5,2 L2.5,8 L8.5,13.5 Z" fill="none" stroke="#444" stroke-width="1"/></svg>
<svg class="a" style="left:279px;top:195px;overflow:hidden" width="1139" height="601" viewBox="279 195 1139 601"><rect x="279" y="195" width="1139" height="601" fill="#fff"/><path d="M291.5,195V796M316.5,195V796M329.5,195V796M341.5,195V796M354.5,195V796M379.5,195V796M392.5,195V796M404.5,195V796M417.5,195V796M442.5,195V796M455.5,195V796M467.5,195V796M480.5,195V796M505.5,195V796M518.5,195V796M530.5,195V796M543.5,195V796M568.5,195V796M581.5,195V796M593.5,195V796M606.5,195V796M631.5,195V796M644.5,195V796M656.5,195V796M669.5,195V796M694.5,195V796M707.5,195V796M719.5,195V796M732.5,195V796M757.5,195V796M770.5,195V796M783.5,195V796M795.5,195V796M820.5,195V796M833.5,195V796M846.5,195V796M858.5,195V796M883.5,195V796M896.5,195V796M909.5,195V796M921.5,195V796M946.5,195V796M959.5,195V796M972.5,195V796M984.5,195V796M1010.5,195V796M1022.5,195V796M1035.5,195V796M1047.5,195V796M1073.5,195V796M1085.5,195V796M1098.5,195V796M1110.5,195V796M1136.5,195V796M1148.5,195V796M1161.5,195V796M1173.5,195V796M1199.5,195V796M1211.5,195V796M1224.5,195V796M1236.5,195V796M1262.5,195V796M1274.5,195V796M1287.5,195V796M1300.5,195V796M1325.5,195V796M1337.5,195V796M1350.5,195V796M1363.5,195V796M1388.5,195V796M1400.5,195V796M1413.5,195V796M279,793.5H1418M279,767.5H1418M279,755.5H1418M279,742.5H1418M279,729.5H1418M279,704.5H1418M279,692.5H1418M279,679.5H1418M279,666.5H1418M279,641.5H1418M279,629.5H1418M279,616.5H1418M279,603.5H1418M279,578.5H1418M279,566.5H1418M279,553.5H1418M279,540.5H1418M279,515.5H1418M279,502.5H1418M279,490.5H1418M279,477.5H1418M279,452.5H1418M279,439.5H1418M279,427.5H1418M279,414.5H1418M279,389.5H1418M279,376.5H1418M279,364.5H1418M279,351.5H1418M279,326.5H1418M279,313.5H1418M279,301.5H1418M279,288.5H1418M279,263.5H1418M279,250.5H1418M279,238.5H1418M279,225.5H1418M279,200.5H1418" stroke="#eeeeee" stroke-width="1" fill="none"/><path d="M303.5,195V796M366.5,195V796M429.5,195V796M493.5,195V796M556.5,195V796M619.5,195V796M682.5,195V796M745.5,195V796M808.5,195V796M871.5,195V796M934.5,195V796M997.5,195V796M1060.5,195V796M1123.5,195V796M1186.5,195V796M1249.5,195V796M1312.5,195V796M1375.5,195V796M279,780.5H1418M279,717.5H1418M279,654.5H1418M279,591.5H1418M279,528.5H1418M279,465.5H1418M279,402.5H1418M279,339.5H1418M279,276.5H1418M279,212.5H1418" stroke="#c0c0c0" stroke-width="1" fill="none"/><path d="M279,654.0H1417M745.0,796V196" stroke="#000" stroke-width="1.8" fill="none"/><path d="M1411,648.0L1417,654.0L1411,660.0M739.0,202L745.0,196L751.0,202" stroke="#000" stroke-width="1.4" fill="none"/><polygon points="587.58,381.29 745.20,654.30 934.35,654.30" fill="rgb(153,51,0)" fill-opacity="0.1"/><polygon points="490.35,212.95 745.20,654.30 1050.99,654.30" fill="rgb(0,0,255)" fill-opacity="0.1"/><g font-family="Liberation Sans" font-size="15" fill="#000"><text x="304.7" y="673" text-anchor="middle">−35</text><text x="367.7" y="673" text-anchor="middle">−30</text><text x="430.8" y="673" text-anchor="middle">−25</text><text x="493.8" y="673" text-anchor="middle">−20</text><text x="556.9" y="673" text-anchor="middle">−15</text><text x="619.9" y="673" text-anchor="middle">−10</text><text x="683.0" y="673" text-anchor="middle">−5</text><text x="809.0" y="673" text-anchor="middle">5</text><text x="872.1" y="673" text-anchor="middle">10</text><text x="935.1" y="673" text-anchor="middle">15</text><text x="998.2" y="673" text-anchor="middle">20</text><text x="1061.2" y="673" text-anchor="middle">25</text><text x="1124.3" y="673" text-anchor="middle">30</text><text x="1187.3" y="673" text-anchor="middle">35</text><text x="1250.4" y="673" text-anchor="middle">40</text><text x="1313.5" y="673" text-anchor="middle">45</text><text x="1376.5" y="673" text-anchor="middle">50</text><text x="738" y="785.8" text-anchor="end">−10</text><text x="738" y="722.7" text-anchor="end">−5</text><text x="738" y="596.6" text-anchor="end">5</text><text x="738" y="533.6" text-anchor="end">10</text><text x="738" y="470.5" text-anchor="end">15</text><text x="738" y="407.5" text-anchor="end">20</text><text x="738" y="344.4" text-anchor="end">25</text><text x="738" y="281.4" text-anchor="end">30</text><text x="738" y="218.3" text-anchor="end">35</text><text x="738" y="673" text-anchor="end">0</text></g><path d="M490.35,195V796M829.91,801.00L477.10,190.00M461.20,190.00L1237.34,801.00M629.73,801.00L1110.65,190.00M796.85,801.00L1423.00,439.56" stroke="#000" stroke-width="1.8" fill="none"/><circle cx="745.20" cy="654.30" r="315.25" stroke="#000" stroke-width="1.8" fill="none"/><circle cx="934.35" cy="654.30" r="441.35" stroke="#000" stroke-width="1.8" fill="none"/><path d="M862.22,505.63A189.15,189.15 0 0 1 934.35,654.30" stroke="#000" stroke-width="1.8" fill="none"/><path d="M587.58,381.29L934.35,654.30" stroke="#8c3a14" stroke-width="1.6" fill="none"/><polygon points="490.35,212.95 745.20,654.30 1050.99,654.30" stroke="#0000e0" stroke-width="4.6" fill="none" stroke-linejoin="round"/><circle cx="490.35" cy="212.95" r="4.3" fill="#000"/><circle cx="490.35" cy="654.30" r="4.3" fill="#000"/><circle cx="745.20" cy="654.30" r="4.3" fill="#000"/><circle cx="1050.99" cy="654.30" r="4.3" fill="#000"/><circle cx="587.58" cy="381.29" r="4.3" fill="#000"/><circle cx="934.35" cy="654.30" r="4.3" fill="#000"/><circle cx="862.22" cy="505.63" r="4.3" fill="#000"/><circle cx="821.62" cy="786.70" r="4.3" fill="#000"/><g font-family="Liberation Sans" fill="#000"><text x="463.5" y="220.0" font-size="20">A</text><text x="461.5" y="642.2" font-size="20">A</text><text x="475.5" y="650.2" font-size="17">1</text><text x="713.7" y="647.4" font-size="20">B</text><text x="876.5" y="507.6" font-size="20">B</text><text x="890.0" y="515.8" font-size="17">1</text><text x="1040.5" y="639.6" font-size="20">C</text><text x="784.3" y="778.3" font-size="20">C</text><text x="798.5" y="787.2" font-size="17">1</text></g><rect x="406" y="405" width="88" height="36" fill="#fff"/><rect x="782" y="402" width="107" height="25.399999999999977" fill="#fff"/><rect x="562" y="470" width="105" height="34.39999999999998" fill="#fff"/><rect x="740.4" y="508.5" width="87.39999999999998" height="34.200000000000045" fill="#fff"/><rect x="829" y="677" width="107" height="34" fill="#fff"/><rect x="912" y="740" width="90" height="35" fill="#fff"/><g font-family="Liberation Sans" fill="#000"><text x="409.0" y="427.9" font-size="20">AA</text><text x="437.0" y="436.7" font-size="17">1</text><text x="451.5" y="427.9" font-size="20">= 35</text><text x="783.8" y="421.6" font-size="20">AC = 56.59</text><text x="564.7" y="493.2" font-size="20">BA = 40.42</text><text x="743.0" y="530.6" font-size="20">BB</text><text x="771.5" y="539.5" font-size="17">1</text><text x="785.5" y="530.6" font-size="20">= 15</text><text x="833.2" y="700.6" font-size="20">BC = 24.25</text><text x="915.7" y="761.0" font-size="20">CC</text><text x="944.0" y="771.0" font-size="17">1</text><text x="958.5" y="761.0" font-size="20">= 21</text></g></svg>
<div class="a" style="left:11px;top:796px;width:1408px;height:1px;background:#a0a0a0"></div>
<div class="t" style="left:21.2px;top:806px;font-size:20px;color:#000">Ввод:</div>
<div class="a" style="left:76px;top:799.5px;width:1275px;height:31px;background:#fff;border:1px solid #a9a9a9;border-top-color:#8a8a8a"></div>
<svg class="a" style="left:1366.75px;top:803px" width="24" height="24"><circle cx="12" cy="12" r="9.3" fill="none" stroke="#a4a4a4" stroke-width="1.9"/><text x="12" y="18" font-family="Liberation Sans" font-weight="bold" font-size="15" fill="#999" text-anchor="middle">?</text></svg>
<div class="a" style="left:1px;top:834px;width:1438px;height:9px;border-radius:0 0 6px 6px;background:linear-gradient(90deg,#b3d3ee 0,#b0d2ec 50px,#86c3cd 120px,#86c4cc 870px,#b9d7f0 900px,#bcd8f0 1440px)"></div>
<div class="a" style="left:980px;top:834px;width:62px;height:9px;background:#c0b48a;filter:blur(2px)"></div>
<div class="a" style="left:92px;top:834px;width:22px;height:9px;background:#3f6b6e;filter:blur(3px)"></div>
<div class="a" style="left:0;top:843px;width:1440px;height:57px;overflow:hidden;background:linear-gradient(90deg,#2563a0 0,#2a70ae 180px,#2b7bc0 480px,#2b7ec4 800px,#2774ba 980px,#1f5c9c 1100px,#1b4c86 1250px,#18427a 1440px);border-top:1px solid #15243a"><div class="a" style="left:0;top:0;width:1440px;height:57px;background:linear-gradient(180deg,rgba(10,30,70,0.35) 0,rgba(10,30,70,0.12) 8px,rgba(0,0,0,0) 20px,rgba(0,0,0,0) 45px,rgba(10,30,70,0.08) 57px)"></div><svg class="a" style="left:0;top:0;filter:blur(2px)" width="1440" height="57"><path d="M1008,-2 Q1050,20 1078,60" fill="none" stroke="rgba(190,225,255,0.75)" stroke-width="6"/></svg></div>
<svg class="a" style="left:14px;top:846px" width="52" height="52" viewBox="0 0 52 52"><defs><radialGradient id="orb" cx="50%" cy="85%" r="75%"><stop offset="0" stop-color="#35d0f5"/><stop offset="0.45" stop-color="#1a6fb8"/><stop offset="1" stop-color="#0d3c70"/></radialGradient><linearGradient id="gl" x1="0" y1="0" x2="0" y2="1"><stop offset="0" stop-color="#e6eef2"/><stop offset="1" stop-color="#8fa7b8"/></linearGradient></defs><circle cx="26" cy="26" r="25" fill="url(#orb)" stroke="#c8dff0" stroke-width="1"/><path d="M3.5,22 Q26,14 48.5,22 Q46,5 26,2 Q6,5 3.5,22 Z" fill="url(#gl)" opacity="0.85"/><g transform="translate(25.9,0) scale(1.08,1.03) translate(-23.4,-0.5)"><path d="M9,25 Q17,21 23,25.5 L22.5,24 Q31,28.5 38,24.5" fill="none" stroke="#1e4a50" stroke-width="1.6"/><path d="M12,12 Q17,9 24,12 L22,24 Q16,21 10,24 Z" fill="#ee5a24"/><path d="M26,12.5 Q33,15 39,11.5 L37,24 Q31,27 24.5,24.5 Z" fill="#7fbf3a"/><path d="M9.5,26 Q16,23 21.5,26 L19.5,38 Q13,35 7.5,38 Z" fill="#3aa4e6"/><path d="M24,26.5 Q31,29 36.5,26 L34.5,38.5 Q28,41 22,38.5 Z" fill="#fbc52c"/></g></svg>
<svg class="a" style="left:100px;top:847px" width="50" height="50" viewBox="0 0 50 50"><defs><linearGradient id="ie" x1="0" y1="0" x2="0" y2="1"><stop offset="0" stop-color="#9af2ff"/><stop offset="0.6" stop-color="#5cd6f6"/><stop offset="1" stop-color="#36b8ea"/></linearGradient></defs><path d="M16,25.4 L42.2,25.4 A15.8,15.8 0 1 0 38.5,36.2" fill="none" stroke="#1d6496" stroke-width="8"/><path d="M16,25.4 L42.2,25.4 A15.8,15.8 0 1 0 38.5,36.2" fill="none" stroke="url(#ie)" stroke-width="6"/><path d="M9.5,43.0 L8.6,43.1 L7.8,43.1 L7.0,43.0 L6.4,42.8 L5.8,42.5 L5.3,42.1 L4.9,41.7 L4.6,41.2 L4.3,40.5 L4.2,39.9 L4.2,39.1 L4.3,38.3 L4.4,37.4 L4.7,36.4 L5.0,35.4 L5.5,34.4 L6.0,33.2 L6.6,32.1 L7.3,30.9 L8.1,29.7 L9.0,28.4 L9.9,27.1 L10.9,25.8 L12.0,24.5 L13.1,23.2 L14.3,21.9 L15.5,20.6 L16.8,19.3 L18.1,18.1 L19.5,16.8 L20.9,15.6 L22.3,14.4 L23.7,13.3 L25.1,12.2 L26.5,11.1 L27.9,10.2 L29.4,9.2 L30.7,8.4 L32.1,7.6 L33.5,6.8 L34.8,6.2 L36.0,5.6 L37.2,5.1 L38.4,4.7 L39.5,4.4 L40.5,4.1 L41.5,4.0 L42.4,3.9 L43.2,3.9 L44.0,4.1 L44.7,4.2 L45.2,4.5 L45.7,4.9 L46.1,5.3 L46.4,5.9 L46.7,6.5 L46.8,7.2 L46.8,7.9 L46.7,8.8 L46.6,9.6" fill="none" stroke="#f3cc35" stroke-width="3.8" stroke-linecap="round"/></svg>
<svg class="a" style="left:177px;top:847px" width="50" height="50" viewBox="0 0 50 50"><defs><linearGradient id="op" x1="0" y1="0" x2="0" y2="1"><stop offset="0" stop-color="#ff3040"/><stop offset="1" stop-color="#c81020"/></linearGradient></defs><ellipse cx="24.7" cy="24.7" rx="23" ry="23.5" fill="url(#op)"/><ellipse cx="24.7" cy="24.7" rx="9" ry="16.5" fill="#2b78bb"/></svg>
<div class="a" style="left:243px;top:845px;width:74px;height:54px;border:1px solid rgba(10,30,60,0.55);border-radius:3px;background:linear-gradient(180deg,rgba(255,255,255,0.30) 0,rgba(255,255,255,0.16) 50%,rgba(255,255,255,0.10) 100%);box-shadow:inset 0 0 0 1px rgba(255,255,255,0.28)"></div>
<div class="a" style="left:321px;top:845px;width:74px;height:54px;border:1px solid rgba(10,30,60,0.55);border-radius:3px;background:linear-gradient(180deg,rgba(255,255,255,0.30) 0,rgba(255,255,255,0.16) 50%,rgba(255,255,255,0.10) 100%);box-shadow:inset 0 0 0 1px rgba(255,255,255,0.28)"></div>
<div class="a" style="left:399px;top:845px;width:74px;height:54px;border:1px solid rgba(10,30,60,0.55);border-radius:3px;background:linear-gradient(180deg,rgba(255,255,255,0.42) 0,rgba(255,255,255,0.30) 50%,rgba(255,255,255,0.22) 100%);box-shadow:inset 0 0 0 1px rgba(255,255,255,0.28)"></div>
<div class="a" style="left:555px;top:845px;width:74px;height:54px;border:1px solid rgba(10,30,60,0.55);border-radius:3px;background:linear-gradient(180deg,rgba(255,255,255,0.30) 0,rgba(255,255,255,0.16) 50%,rgba(255,255,255,0.10) 100%);box-shadow:inset 0 0 0 1px rgba(255,255,255,0.28)"></div>
<svg class="a" style="left:258px;top:849.7px" width="44" height="44" viewBox="-22 -22 44 44"><path d="M0,0 L-18.8,-10.85 A21.7,21.7 0 0 1 18.8,-10.85 Z" fill="#db4437"/><path d="M0,0 L18.8,-10.85 A21.7,21.7 0 0 1 0,21.7 Z" fill="#f4c20d"/><path d="M0,0 L0,21.7 A21.7,21.7 0 0 1 -18.8,-10.85 Z" fill="#0f9d58"/><circle r="10.2" fill="#fff"/><circle r="8.2" fill="#4a86e0"/></svg>
<svg class="a" style="left:333px;top:847px" width="50" height="50" viewBox="0 0 50 50"><path d="M6,10 Q6,2 14,2 L39,2 L39,38 L6,38 Z" fill="#2a5cb8"/><path d="M8,12 Q8,4 15,4 L30,4 L30,36 L8,36 Z" fill="#5b8ad6" opacity="0.6"/><path d="M15,8 L47,10 L45,48 L12,45 Z" fill="#f4f8fc" stroke="#b0c0d8" stroke-width="0.6"/><text x="18" y="26" font-family="Liberation Serif" font-weight="bold" font-style="italic" font-size="15" fill="#1b3f9a">W</text><path d="M33,15 L41,15.5 M32.5,20 L41,20.5 M32,25 L40.5,25.5 M16,31 L40,33 M15.5,36 L40,38" stroke="#1b3f9a" stroke-width="2.4"/></svg>
<div class="a" style="left:412px;top:848px;width:47.5px;height:47.8px;background:#fff;border-radius:3px"></div>
<svg class="a" style="left:412px;top:848px" width="48" height="48" viewBox="412 848 48 48"><polygon points="435.3,858 451.7,867 444.7,883 426.3,885 420.5,869.7" fill="none" stroke="#666" stroke-width="2.2"/><circle cx="435.3" cy="858" r="3.7" fill="#9999ff" stroke="#111" stroke-width="1.1"/><circle cx="451.7" cy="867" r="3.7" fill="#9999ff" stroke="#111" stroke-width="1.1"/><circle cx="444.7" cy="883" r="3.7" fill="#9999ff" stroke="#111" stroke-width="1.1"/><circle cx="426.3" cy="885" r="3.7" fill="#9999ff" stroke="#111" stroke-width="1.1"/><circle cx="420.5" cy="869.7" r="3.7" fill="#9999ff" stroke="#111" stroke-width="1.1"/></svg>
<svg class="a" style="left:489px;top:847px" width="50" height="50" viewBox="0 0 50 50"><path d="M4,6 L14,6 L16,4 L22,4 L24,7 L44,7 L44,42 L4,42 Z" fill="#e8c45a"/><rect x="7" y="4" width="12" height="4" fill="#fff"/><rect x="8" y="5" width="2" height="2" fill="#3a3"/><rect x="13" y="7" width="12" height="4" fill="#fff"/><rect x="14" y="8" width="2" height="2" fill="#c33"/><rect x="20" y="10" width="12" height="4" fill="#fff"/><rect x="21" y="11" width="2" height="2" fill="#36c"/><path d="M4,12 L46,12 L46,44 L4,44 Z" fill="#f5dc85"/><path d="M10,31 L40,31 L40,46 L10,46 Z" fill="#a8d8f0"/><rect x="17" y="38" width="16" height="5" fill="#e9c45a"/></svg>
<svg class="a" style="left:567px;top:847px" width="50" height="50" viewBox="0 0 50 50"><path d="M1,10 Q1,1 10,1 L39,1 L39,41 L1,41 Z" fill="#2f8a2f"/><path d="M3,12 Q3,3 11,3 L37,3 L37,39 L3,39 Z" fill="#d8e8d0" opacity="0.7"/><path d="M7,9.5 L47,12 L44,44 L3,40 Z" fill="#eef5e8" stroke="#90b090" stroke-width="0.6"/><path d="M9,14 L22,14 L30,27 L24,27 Z" fill="#2c7a2c"/><path d="M22,14 L28,14 L13,28 L8,28 Z" fill="#3f9a3f"/><rect x="32" y="16" width="9" height="6" fill="#5aa05a"/><rect x="31.5" y="24" width="9" height="6" fill="#5aa05a"/><rect x="8" y="32" width="8.5" height="6" fill="#5aa05a"/><rect x="19" y="33" width="8.5" height="6" fill="#5aa05a"/><rect x="30" y="34" width="9" height="6" fill="#5aa05a"/></svg>
<div class="t" style="left:1112.5px;top:862px;font-size:16px;color:#fff">RU</div>
<svg class="a" style="left:1160px;top:860px" width="150" height="30" viewBox="0 0 150 30"><path d="M5,17.5 L11,11.5 L17,17.5 Z" fill="#fff"/><path d="M43,8 L43,21 M45,10 L50,6 L50,24 L45,20 Z" fill="#f2f2f2" stroke="#fff" stroke-width="1.2"/><path d="M53,11 Q56,15 53,19 M56,8 Q61,15 56,22 M59,5 Q66,15 59,25" fill="none" stroke="#e8e8e8" stroke-width="1.4"/><rect x="80" y="19" width="3" height="3" fill="#fff"/><rect x="84.5" y="16" width="3" height="6" fill="#ddd"/><rect x="89" y="13" width="3" height="9" fill="#aab"/><rect x="93.5" y="9.5" width="3" height="12.5" fill="#889"/><rect x="98" y="6" width="3" height="16" fill="#778"/><path d="M115.5,2 L115.5,27" stroke="#fff" stroke-width="1.5"/><path d="M116,3 Q122,1 126,5 Q131,9 137,6 L137,16 Q131,19 126,15 Q122,12 116,14 Z" fill="#fafafa"/><circle cx="130.5" cy="19.5" r="5.2" fill="#d21f1f" stroke="#fff" stroke-width="0.6"/><path d="M128.3,17.3 L132.7,21.7 M132.7,17.3 L128.3,21.7" stroke="#fff" stroke-width="1.5"/></svg>
<div class="t" style="left:1348px;top:854px;font-size:17.5px;color:#fff">0:59</div>
<div class="t" style="left:1321px;top:878.5px;font-size:17.5px;color:#fff">24.05.2018</div>
<div class="a" style="left:1426px;top:845px;width:14px;height:55px;border:1px solid rgba(180,200,230,0.7);border-right:none;border-radius:2px 0 0 2px;background:linear-gradient(180deg,rgba(255,255,255,0.25),rgba(255,255,255,0.08))"></div>
</body></html>
